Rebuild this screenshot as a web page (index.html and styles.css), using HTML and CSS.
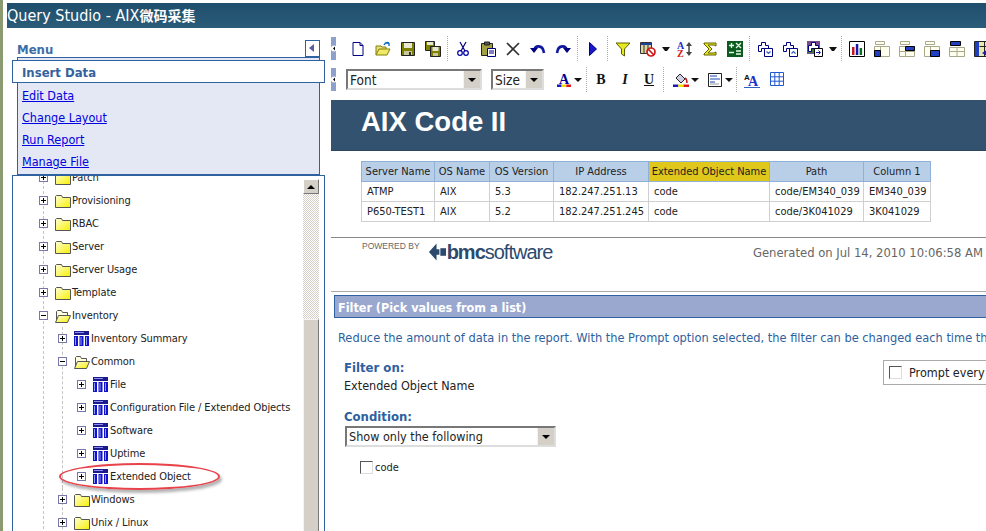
FILE: index.html
```html
<!DOCTYPE html>
<html>
<head>
  <meta charset="UTF-8">
  <title>Query Studio - AIX微码采集</title>
  <link rel="stylesheet" href="styles.css">
</head>
<body>

<svg class="gradients" xmlns="http://www.w3.org/2000/svg">
  <defs>
    <linearGradient id="g-folder" x1="0" y1="0" x2="1" y2="1">
      <stop offset="0" stop-color="#ffffd8"/>
      <stop offset="1" stop-color="#f8f000"/>
    </linearGradient>
  </defs>
</svg>

<svg class="sprite" xmlns="http://www.w3.org/2000/svg">
  <symbol id="i-folder" viewBox="0 0 16 14">
    <path d="M.5 13.500V2.500l1-1h5l1 2h8v10z" fill="url(#g-folder)" stroke="#555"/>
  </symbol>
  <symbol id="i-folder-open" viewBox="0 0 16 14">
    <path d="M1.500 13V2.500l1-1h4l1 2h5v3" fill="#ffffe0" stroke="#555"/>
    <path d="M.5 13.500l3-7h12l-3 7z" fill="url(#g-folder)" stroke="#555"/>
  </symbol>
  <symbol id="i-table" viewBox="0 0 15 15">
    <path d="M0 0h15v4H0z" fill="#1a1a8c"/>
    <path d="M1 1h9v1H1z" fill="#8c8cf0"/>
    <path d="M0 5h4v10H0zM5.500 5h4v10h-4zM11 5h4v10h-4z" fill="#1212c8"/>
    <path d="M1 6h1v8H1zM6.500 6h1v8h-1zM12 6h1v8h-1z" fill="#8c9cff"/>
  </symbol>
  <symbol id="i-new" viewBox="0 0 16 16">
    <path d="M3 1.500h7l3 3v10H3z" fill="#fff" stroke="#000080"/>
    <path d="M10 1.500v3h3" fill="none" stroke="#000080"/>
  </symbol>
  <symbol id="i-open" viewBox="0 0 16 16">
    <path d="M1 14V5h5l1 1h4v2" fill="#e8e080" stroke="#808000"/>
    <path d="M1 14l3-6h11l-3 6z" fill="#f0e868" stroke="#808000"/>
    <path d="M9 4c1-2 3-3 5-2M14 2v3M14 2h-3" fill="none" stroke="#0060c0" stroke-width="1.300"/>
  </symbol>
  <symbol id="i-save" viewBox="0 0 16 16">
    <path d="M1.500 1.500h13v13h-13z" fill="#808000" stroke="#222"/>
    <path d="M4 2h8v5H4z" fill="#e8e8d0"/>
    <path d="M4 10h8v4H4z" fill="#c8c8a0"/>
    <path d="M9 11h2v3H9z" fill="#333"/>
  </symbol>
  <symbol id="i-saveall" viewBox="0 0 16 16">
    <path d="M.5.500h9v9h-9z" fill="#808000" stroke="#222"/>
    <path d="M2 1h6v3H2z" fill="#e8e8d0"/>
    <path d="M5.500 5.500h10v10h-10z" fill="#808000" stroke="#222"/>
    <path d="M7.500 6h6v4h-6z" fill="#e8e8d0"/>
    <path d="M8 12h5v3H8z" fill="#c8c8a0"/>
  </symbol>
  <symbol id="i-cut" viewBox="0 0 16 16">
    <path d="M5 1l5 9M11 1L6 10" fill="none" stroke="#000080" stroke-width="1.200"/>
    <circle cx="5" cy="12" r="2.300" fill="#fff" stroke="#0000a0" stroke-width="1.200"/>
    <circle cx="11" cy="12" r="2.300" fill="#fff" stroke="#0000a0" stroke-width="1.200"/>
  </symbol>
  <symbol id="i-paste" viewBox="0 0 16 16">
    <path d="M1.500 2.500h11v12h-11z" fill="#a0a040" stroke="#222"/>
    <path d="M4.500 1h5v3h-5z" fill="#555" stroke="#222"/>
    <path d="M7.500 7.500h8v8h-8z" fill="#fff" stroke="#000080"/>
    <path d="M9 10h5M9 12h5" stroke="#000080"/>
  </symbol>
  <symbol id="i-delete" viewBox="0 0 16 16">
    <path d="M2 2l12 12M14 2L2 14" stroke="#333" stroke-width="1.700" fill="none"/>
  </symbol>
  <symbol id="i-undo" viewBox="0 0 16 16">
    <path d="M4 10c0-6 9-7 10 2" fill="none" stroke="#1018a0" stroke-width="2.600"/>
    <path d="M0 7h8l-4 5z" fill="#000080"/>
  </symbol>
  <symbol id="i-redo" viewBox="0 0 16 16">
    <path d="M12 10c0-6-9-7-10 2" fill="none" stroke="#1018a0" stroke-width="2.600"/>
    <path d="M16 7H8l4 5z" fill="#000080"/>
  </symbol>
  <symbol id="i-run" viewBox="0 0 16 16">
    <path d="M4.500 1.500l7 6.500-7 6.500z" fill="#1818c8" stroke="#000080"/>
  </symbol>
  <symbol id="i-filter" viewBox="0 0 16 16">
    <path d="M1 2h14L9.500 8v7l-3-2V8z" fill="#e8e820" stroke="#606000"/>
  </symbol>
  <symbol id="i-suppress" viewBox="0 0 16 16">
    <path d="M.5 1.500h11v11H.5z" fill="#d8d8a0" stroke="#333"/>
    <path d="M1 2h10v2H1z" fill="#2040a0"/>
    <path d="M4 4v8M8 4v8" stroke="#333"/>
    <circle cx="11" cy="11" r="4" fill="#fff" stroke="#d01818" stroke-width="1.700"/>
    <path d="M8 8l6 6" stroke="#d01818" stroke-width="1.700"/>
  </symbol>
  <symbol id="i-sort" viewBox="0 0 16 16">
    <text x="0" y="8" class="ic-txt ic-blue">A</text>
    <text x="0" y="16" class="ic-txt ic-red">Z</text>
    <path d="M12 1l-3 4h6zM12 15l-3-4h6z" fill="#444"/>
    <path d="M12 4v8" stroke="#444" stroke-width="1.500"/>
  </symbol>
  <symbol id="i-sum" viewBox="0 0 16 16">
    <path d="M2 2h12v3l-2-1H6l4 4-4 4h6l2-1v3H2v-1l5-5-5-5z" fill="#e8e820" stroke="#606000"/>
  </symbol>
  <symbol id="i-calc" viewBox="0 0 16 16">
    <path d="M0 0h16v16H0z" fill="#0c5c20"/>
    <path d="M2 4.500h5M4.500 2v5M9 2l5 5M14 2L9 7M2 11.500h5M9 10h5M9 13h5" stroke="#e8ffe8" stroke-width="1.300"/>
  </symbol>
  <symbol id="i-addrow-down" viewBox="0 0 16 16">
    <path d="M4.500 1.500h4v3h3v3h-7v3h-3v-6h3z" fill="#fff" stroke="#000080"/>
    <path d="M7.500 7.500h8v8h-8z" fill="#fff" stroke="#000080"/>
    <path d="M9.500 10.500l2 2 2-2" fill="none" stroke="#3060c0" stroke-width="1.200"/>
  </symbol>
  <symbol id="i-addrow-up" viewBox="0 0 16 16">
    <path d="M4.500 1.500h4v3h3v3h-7v3h-3v-6h3z" fill="#fff" stroke="#000080"/>
    <path d="M7.500 7.500h8v8h-8z" fill="#fff" stroke="#000080"/>
    <path d="M9.500 12.500l2-2 2 2" fill="none" stroke="#3060c0" stroke-width="1.200"/>
  </symbol>
  <symbol id="i-addrow-color" viewBox="0 0 16 16">
    <path d="M0 0h13v13H0z" fill="#7a4a90"/>
    <path d="M1 5h11v7H1z" fill="#3c7a50"/>
    <path d="M4.500 1.500h4v3h3v3h-7v3h-3v-6h3z" fill="#fff" stroke="#000080"/>
    <path d="M7.500 7.500h8v8h-8z" fill="#fff" stroke="#000"/>
    <path d="M9 11.500h4M11.500 9.500l2 2-2 2" fill="none" stroke="#1818a8"/>
  </symbol>
  <symbol id="i-chart" viewBox="0 0 16 16">
    <path d="M.5.500h15v15H.5z" fill="#fff" stroke="#000"/>
    <path d="M3 6h2.500v8H3z" fill="#c01820"/>
    <path d="M6.800 3h2.500v11H6.800z" fill="#1818b0"/>
    <path d="M10.600 7h2.500v7h-2.500z" fill="#0c6c20"/>
  </symbol>
  <symbol id="i-group-bl" viewBox="0 0 16 16">
    <path d="M1.500.500h9v3h-9zM.5 5.500h15v10H.5zM6.500 5.500v10" fill="#fffff0" stroke="#aaa88c"/>
    <path d="M.5 9.500h6v6h-6z" fill="#2040c0" stroke="#000"/>
  </symbol>
  <symbol id="i-group-tr" viewBox="0 0 16 16">
    <path d="M1.500.500h9v3h-9zM.5 5.500h15v10H.5zM6.500 5.500v10M.5 10.500h15" fill="#fffff0" stroke="#aaa88c"/>
    <path d="M6.500 5.500h9v4h-9z" fill="#2040c0" stroke="#000"/>
  </symbol>
  <symbol id="i-group-br" viewBox="0 0 16 16">
    <path d="M1.500.500h9v3h-9zM.5 5.500h15v10H.5zM6.500 5.500v4" fill="#fffff0" stroke="#aaa88c"/>
    <path d="M6.500 9.500h9v6h-9z" fill="#2040c0" stroke="#000"/>
  </symbol>
  <symbol id="i-group-t" viewBox="0 0 16 16">
    <path d="M1.500.500h10v4h-10z" fill="#2040c0" stroke="#000"/>
    <path d="M.5 6.500h15v9H.5zM8 6.500v9M.5 10.500h15" fill="#fffff0" stroke="#aaa88c"/>
  </symbol>
  <symbol id="i-pivot" viewBox="0 0 16 16">
    <path d="M.5.500h15v15H.5z" fill="#e8e8b0" stroke="#222"/>
    <path d="M1 1h4v14H1z" fill="#2040c0"/>
    <path d="M5.500 5.500h10M10.500 1v14" stroke="#222"/>
    <path d="M13 9l-5 3 5 3z" fill="#1818c8"/>
  </symbol>
  <symbol id="i-fontcolor" viewBox="0 0 16 16">
    <text x="3" y="12" class="ic-txt ic-navy">A</text>
    <path d="M1 12.500h4.600V15H1z" fill="#1818c0"/>
    <path d="M5.600 12.500h4.700V15H5.600z" fill="#f0e000"/>
    <path d="M10.300 12.500H15V15h-4.700z" fill="#e01818"/>
  </symbol>
  <symbol id="i-fill" viewBox="0 0 16 16">
    <path d="M3 6l4-4 5 5-4 4z" fill="#d0d0e0" stroke="#223"/>
    <path d="M12 6c2 1 2 3 2 5" fill="none" stroke="#c02020" stroke-width="1.500"/>
    <path d="M0 12.500h5.300V15H0z" fill="#1818c0"/>
    <path d="M5.300 12.500h5.300V15H5.300z" fill="#f0e000"/>
    <path d="M10.600 12.500H16V15h-5.400z" fill="#e01818"/>
  </symbol>
  <symbol id="i-format" viewBox="0 0 16 16">
    <path d="M1.500 1.500h13v13h-13z" fill="#fff" stroke="#222"/>
    <path d="M3 4h7M3 7h10M3 10h5" stroke="#1848b0"/>
    <path d="M3 12h9" stroke="#999"/>
  </symbol>
  <symbol id="i-fontstyle" viewBox="0 0 16 16">
    <text x="0" y="8" class="ic-txt-s">A</text>
    <text x="4" y="14" class="ic-txt ic-big">A</text>
    <path d="M0 15.500h16" stroke="#3060c0"/>
  </symbol>
  <symbol id="i-grid" viewBox="0 0 14 14">
    <path d="M.5.500h13v13H.5zM4.800.500v13M9.200.500v13M.5 4.800h13M.5 9.200h13" fill="#fff" stroke="#2058d0"/>
  </symbol>
  <symbol id="i-grip" viewBox="0 0 6 23">
    <path d="M0 0h5v23H0z" fill="#8ea0cc" stroke="none"/>
    <circle cx="3" cy="11.500" r="3" fill="#fff"/>
    <path d="M4 9.500l-2 2 2 2z" fill="#000"/>
  </symbol>
</svg>

<div class="title">Query Studio - AIX<span class="cjk">微码采集</span></div>

<div class="main">

  <div class="left">
    <div class="menu-head">
      <span>Menu</span>
      <span class="collapse"></span>
    </div>
    <div class="menu-box">
      <div class="tab">Insert Data</div>
      <a href="#">Edit Data</a>
      <a href="#">Change Layout</a>
      <a href="#">Run Report</a>
      <a href="#">Manage File</a>
    </div>
    <div class="tree-panel">
      <ul class="tree">
        <li class="node"><i class="box"></i><svg class="folder"><use href="#i-folder"/></svg>Patch</li>
        <li class="node"><i class="box"></i><svg class="folder"><use href="#i-folder"/></svg>Provisioning</li>
        <li class="node"><i class="box"></i><svg class="folder"><use href="#i-folder"/></svg>RBAC</li>
        <li class="node"><i class="box"></i><svg class="folder"><use href="#i-folder"/></svg>Server</li>
        <li class="node"><i class="box"></i><svg class="folder"><use href="#i-folder"/></svg>Server Usage</li>
        <li class="node"><i class="box"></i><svg class="folder"><use href="#i-folder"/></svg>Template</li>
        <li class="node"><i class="box minus"></i><svg class="folder"><use href="#i-folder-open"/></svg>Inventory</li>
        <li>
          <ul class="sub">
            <li class="node"><i class="box"></i><svg class="tbl"><use href="#i-table"/></svg>Inventory Summary</li>
            <li class="node"><i class="box minus"></i><svg class="folder"><use href="#i-folder-open"/></svg>Common</li>
            <li>
              <ul class="sub deep">
                <li class="node"><i class="box"></i><svg class="tbl"><use href="#i-table"/></svg>File</li>
                <li class="node"><i class="box"></i><svg class="tbl"><use href="#i-table"/></svg>Configuration File / Extended Objects</li>
                <li class="node"><i class="box"></i><svg class="tbl"><use href="#i-table"/></svg>Software</li>
                <li class="node"><i class="box"></i><svg class="tbl"><use href="#i-table"/></svg>Uptime</li>
                <li class="node"><i class="box"></i><svg class="tbl"><use href="#i-table"/></svg>Extended Object</li>
              </ul>
            </li>
          </ul>
        </li>
        <li>
          <ul class="sub">
            <li class="node"><i class="box"></i><svg class="folder"><use href="#i-folder"/></svg>Windows</li>
            <li class="node"><i class="box"></i><svg class="folder"><use href="#i-folder"/></svg>Unix / Linux</li>
          </ul>
        </li>
      </ul>
      <div class="scrollbar">
        <div class="scroll-up"></div>
        <div class="scroll-track"></div>
        <div class="scroll-thumb"></div>
      </div>
      <div class="oval"></div>
    </div>
  </div>

  <div class="right">

    <div class="toolbar first">
      <svg class="grip"><use href="#i-grip"/></svg>
      <span class="btn"><svg><use href="#i-new"/></svg></span>
      <span class="btn"><svg><use href="#i-open"/></svg></span>
      <span class="btn"><svg><use href="#i-save"/></svg></span>
      <span class="btn"><svg><use href="#i-saveall"/></svg></span>
      <span class="sep"></span>
      <span class="btn"><svg><use href="#i-cut"/></svg></span>
      <span class="btn"><svg><use href="#i-paste"/></svg></span>
      <span class="btn"><svg><use href="#i-delete"/></svg></span>
      <span class="btn"><svg><use href="#i-undo"/></svg></span>
      <span class="btn"><svg><use href="#i-redo"/></svg></span>
      <span class="sep"></span>
      <span class="btn"><svg><use href="#i-run"/></svg></span>
      <span class="sep"></span>
      <span class="btn"><svg><use href="#i-filter"/></svg></span>
      <span class="btn"><svg><use href="#i-suppress"/></svg></span>
      <span class="dd"></span>
      <span class="btn"><svg><use href="#i-sort"/></svg></span>
      <span class="btn"><svg><use href="#i-sum"/></svg></span>
      <span class="btn"><svg><use href="#i-calc"/></svg></span>
      <span class="sep"></span>
      <span class="btn"><svg><use href="#i-addrow-down"/></svg></span>
      <span class="btn"><svg><use href="#i-addrow-up"/></svg></span>
      <span class="btn"><svg><use href="#i-addrow-color"/></svg></span>
      <span class="dd"></span>
      <span class="sep"></span>
      <span class="btn"><svg><use href="#i-chart"/></svg></span>
      <span class="btn"><svg><use href="#i-group-bl"/></svg></span>
      <span class="btn"><svg><use href="#i-group-tr"/></svg></span>
      <span class="btn"><svg><use href="#i-group-br"/></svg></span>
      <span class="btn"><svg><use href="#i-group-t"/></svg></span>
      <span class="btn"><svg><use href="#i-pivot"/></svg></span>
    </div>

    <div class="toolbar">
      <svg class="grip"><use href="#i-grip"/></svg>
      <div class="combo font-combo"><span>Font</span><i class="combo-btn"></i></div>
      <div class="combo size-combo"><span>Size</span><i class="combo-btn"></i></div>
      <span class="btn-dd color-btn"><svg><use href="#i-fontcolor"/></svg><span class="dd-mini"></span></span>
      <span class="sep"></span>
      <span class="btn-text bold">B</span>
      <span class="btn-text ital">I</span>
      <span class="btn-text under">U</span>
      <span class="sep"></span>
      <span class="btn-dd"><svg><use href="#i-fill"/></svg><span class="dd-mini"></span></span>
      <span class="btn-dd"><svg><use href="#i-format"/></svg><span class="dd-mini"></span></span>
      <span class="sep"></span>
      <span class="btn"><svg><use href="#i-fontstyle"/></svg></span>
      <span class="btn"><svg class="grid-ico"><use href="#i-grid"/></svg></span>
    </div>

    <div class="banner">AIX Code II</div>

    <table class="report">
      <tr>
        <th class="c1">Server Name</th>
        <th class="c2">OS Name</th>
        <th class="c3">OS Version</th>
        <th class="c4">IP Address</th>
        <th class="c5 picked">Extended Object Name</th>
        <th class="c6">Path</th>
        <th class="c7">Column 1</th>
      </tr>
      <tr>
        <td>ATMP</td><td>AIX</td><td>5.3</td><td>182.247.251.13</td><td>code</td><td>code/EM340_039</td><td>EM340_039</td>
      </tr>
      <tr>
        <td>P650-TEST1</td><td>AIX</td><td>5.2</td><td>182.247.251.245</td><td>code</td><td>code/3K041029</td><td>3K041029</td>
      </tr>
    </table>

    <div class="report-foot">
      <div class="powered">POWERED BY</div>
      <div class="logo">
        <svg class="logo-mark" viewBox="0 0 20 20">
          <path d="M9 1L1 10l8 9v-6h3V7H9z" fill="#2b4a6e"/>
          <path d="M13 6h6v8h-6z" fill="#2b4a6e"/>
        </svg>
        <span class="logo-bmc">bmc</span><span class="logo-soft">software</span>
      </div>
      <div class="generated">Generated on Jul 14, 2010 10:06:58 AM</div>
    </div>

    <div class="filter">
      <div class="filter-title">Filter (Pick values from a list)</div>
      <p class="filter-help">Reduce the amount of data in the report. With the Prompt option selected, the filter can be changed each time the report is run.</p>
      <div class="filter-top">
        <div>
          <div class="label">Filter on:</div>
          <div class="value">Extended Object Name</div>
        </div>
        <div class="prompt"><i class="check"></i>Prompt every time the report runs</div>
      </div>
      <div class="label cond">Condition:</div>
      <div class="combo cond-combo"><span>Show only the following</span><i class="combo-btn"></i></div>
      <div class="pick"><i class="check"></i>code</div>
    </div>

  </div>
</div>

</body>
</html>
```

FILE: styles.css
```css
body {
  margin: 0;
  height: 531px;
  overflow: hidden;
  background-color: #fff;
  border-left: 3px solid #8c9a72;
  font-family: "DejaVu Sans", sans-serif;
  font-stretch: condensed;
  font-size: 11px;
  color: #222;
  box-sizing: border-box;
}
.sprite {
  display: none;
}
.gradients {
  display: block;
  width: 0;
  height: 0;
}
.ic-txt {
  font: bold 10px "Liberation Serif", serif;
}
.ic-txt-s {
  font: bold 8px "Liberation Sans", sans-serif;
  fill: #111;
}
.ic-blue { fill: #2030d0; }
.ic-red { fill: #d01818; }
.ic-navy { fill: #000090; font-size: 14px; }
.ic-big { fill: #2030c8; font-size: 14px; }

.title {
  margin: 3px 0 0 4px;
  height: 25px;
  line-height: 25px;
  overflow: hidden;
  background: linear-gradient(#1f4f6c, #2a5b78);
  color: #fff;
  font-size: 16px;
  font-family: "DejaVu Sans", "Noto Sans CJK SC", sans-serif;
}
.cjk {
  font-size: 14px;
  font-weight: bold;
}

.main {
  display: flex;
}
.left {
  flex: none;
  width: 313px;
  height: 503px;
  margin-right: 6px;
  padding-left: 9px;
  overflow: hidden;
}
.right {
  flex: none;
  width: 655px;
  height: 503px;
  overflow: hidden;
}

.menu-head {
  display: flex;
  justify-content: space-between;
  align-items: flex-end;
  height: 16px;
  margin: 13px 5px 0 5px;
  font-size: 13px;
  font-weight: bold;
  color: #3c6ea6;
}
.menu-head span:first-child {
  line-height: 16px;
  margin-bottom: -1px;
}
.collapse {
  position: relative;
  width: 13px;
  height: 15px;
  border: 1px solid #2e62a0;
  background-color: #fff;
}
.collapse:after {
  content: "";
  position: absolute;
  left: 3px;
  top: 3px;
  border: 4px solid transparent;
  border-left: 0;
  border-right: 5px solid #5a5aa0;
}
.menu-box {
  margin: 0 5px;
  height: 118px;
  box-sizing: border-box;
  border: 1px solid #2e62a0;
  background-color: #e3e8f4;
  font-size: 12.5px;
  padding-left: 4px;
}
.tab {
  margin: 2px -6px 0 -10px;
  padding-left: 9px;
  height: 23px;
  line-height: 23px;
  box-sizing: border-box;
  border: 1px solid #2e62a0;
  background-color: #fff;
  font-size: 13px;
  font-weight: bold;
  color: #34629c;
}
.menu-box a {
  display: block;
  height: 22px;
  line-height: 25px;
  color: #0000e0;
}

.tree-panel {
  position: relative;
  height: 356px;
  width: 313px;
  box-sizing: border-box;
  overflow: hidden;
  border: 1px solid #2e62a0;
  border-bottom: 0;
  background-color: #fff;
}
.tree, .sub {
  list-style: none;
  margin: 0;
  padding: 0;
}
.tree {
  margin: -10px 0 0 30px;
  border-left: 1px dashed #c4c4c4;
}
.sub {
  margin-left: 18px;
  border-left: 1px dashed #c4c4c4;
}
.sub.deep {
  border-left: 1px solid transparent;
}
.node {
  display: flex;
  align-items: center;
  height: 23px;
  white-space: nowrap;
  letter-spacing: -0.1px;
  color: #222;
}
.box {
  position: relative;
  flex: none;
  width: 7px;
  height: 7px;
  margin-left: -5px;
  margin-right: 7px;
  border: 1px solid #7878a8;
  background-color: #fff;
}
.box:before {
  content: "";
  position: absolute;
  left: 1px;
  top: 3px;
  width: 5px;
  height: 1px;
  background-color: #000;
}
.box:after {
  content: "";
  position: absolute;
  left: 3px;
  top: 1px;
  width: 1px;
  height: 5px;
  background-color: #000;
}
.box.minus:after {
  display: none;
}
.folder {
  flex: none;
  width: 16px;
  height: 14px;
  margin-right: 1px;
}
.tbl {
  flex: none;
  width: 15px;
  height: 15px;
  margin-right: 2px;
}

.scrollbar {
  position: absolute;
  right: 5px;
  top: 3px;
  width: 16px;
  height: 360px;
}
.scroll-up {
  position: relative;
  height: 15px;
  box-sizing: border-box;
  background-color: #d4d0c8;
  border: 1px solid;
  border-color: #fff #777 #777 #fff;
}
.scroll-up:after {
  content: "";
  position: absolute;
  left: 3px;
  top: 5px;
  border: 4px solid transparent;
  border-top: 0;
  border-bottom: 4px solid #000;
}
.scroll-track {
  height: 125px;
  background: repeating-conic-gradient(#d4d0c8 0 25%, #fff 0 50%) 0 0 / 2px 2px;
}
.scroll-thumb {
  height: 220px;
  box-sizing: border-box;
  background-color: #d4d0c8;
  border: 1px solid;
  border-color: #f4f4f4 #777 #777 #f4f4f4;
}
.oval {
  position: absolute;
  left: 46px;
  top: 287px;
  width: 157px;
  height: 23px;
  border: 2px solid #e8434a;
  border-radius: 50%;
  box-shadow: 2px 3px 3px rgba(0, 0, 0, 0.3);
}

.toolbar {
  display: flex;
  align-items: center;
  height: 25px;
  margin-top: 6px;
}
.toolbar.first {
  margin-top: 8px;
}
.grip {
  flex: none;
  width: 6px;
  height: 23px;
  margin-right: 8px;
}
.btn {
  flex: none;
  width: 25px;
  height: 16px;
  display: flex;
  justify-content: center;
}
.btn svg {
  width: 16px;
  height: 16px;
}
.btn .grid-ico {
  width: 14px;
  height: 14px;
}
.sep {
  flex: none;
  width: 0;
  height: 25px;
  margin: 0 2px;
  border-left: 1px dotted #aaa;
}
.dd {
  flex: none;
  width: 8px;
  height: 4px;
  margin: 0 2px;
  box-sizing: border-box;
  border-top: 4px solid #111;
  border-left: 3px solid transparent;
  border-right: 3px solid transparent;
}
.btn-dd {
  flex: none;
  display: flex;
  align-items: center;
  width: 34px;
  padding-left: 7px;
  box-sizing: border-box;
}
.btn-dd svg {
  width: 16px;
  height: 16px;
}
.color-btn {
  width: 30px;
  margin-left: 10px;
  padding-left: 2px;
}
.dd-mini {
  width: 0;
  height: 0;
  margin-left: 2px;
  border-top: 4px solid #111;
  border-left: 4px solid transparent;
  border-right: 4px solid transparent;
}
.btn-text {
  flex: none;
  width: 24px;
  text-align: center;
  font-family: "Liberation Serif", serif;
  font-stretch: normal;
  font-weight: bold;
  font-size: 14px;
  color: #111;
}
.ital { font-style: italic; }
.under { text-decoration: underline; }

.combo {
  display: flex;
  align-items: center;
  justify-content: space-between;
  box-sizing: border-box;
  height: 21px;
  border: 2px solid;
  border-color: #777 #ddd #ddd #777;
  background-color: #fff;
  padding-left: 2px;
  font-size: 12.5px;
}
.combo-btn {
  position: relative;
  width: 16px;
  height: 17px;
  background-color: #d4d0c8;
  border-left: 1px solid #f4f4f4;
}
.combo-btn:after {
  content: "";
  position: absolute;
  left: 4px;
  top: 7px;
  border: 4px solid transparent;
  border-bottom: 0;
  border-top: 4px solid #000;
}
.font-combo {
  flex: none;
  width: 136px;
  margin-left: 1px;
  font-size: 13.5px;
}
.size-combo {
  flex: none;
  width: 53px;
  margin-left: 9px;
  font-size: 13.5px;
}

.banner {
  height: 51px;
  margin-top: 8px;
  line-height: 44px;
  padding-left: 30px;
  background-color: #33526f;
  border-bottom: 1px solid #2b4760;
  box-sizing: border-box;
  color: #fff;
  font-family: "Liberation Sans", sans-serif;
  font-stretch: normal;
  font-size: 27.5px;
  font-weight: bold;
}

.report {
  margin: 10px 0 0 30px;
  width: 570px;
  border-collapse: collapse;
  table-layout: fixed;
  font-size: 11px;
}
.report th, .report td {
  box-sizing: border-box;
  height: 20px;
  padding: 0 0 0 5px;
  text-align: left;
  white-space: nowrap;
  overflow: hidden;
  font-weight: normal;
  border: 1px solid #cfcfcf;
  color: #222;
}
.report th {
  text-align: center;
  padding: 0;
  background-color: #b9cfe8;
  border: 1px solid #8fb0d8;
}
.report th.picked {
  background-color: #dfc71c;
}
.c1 { width: 73px; }
.c2 { width: 55px; }
.c3 { width: 64px; }
.c4 { width: 95px; }
.c5 { width: 121px; }
.c6 { width: 94px; }
.c7 { width: 67px; }

.report-foot {
  display: flex;
  align-items: flex-start;
  height: 55px;
  margin-top: 15px;
  border-top: 1px solid #888;
  border-bottom: 1px solid #aaa;
  box-sizing: border-box;
}
.powered {
  margin: 3px 0 0 31px;
  font-family: "Liberation Sans", sans-serif;
  font-stretch: normal;
  font-size: 8.5px;
  color: #666;
}
.logo {
  display: flex;
  align-items: center;
  margin: 4px 0 0 8px;
  height: 20px;
  color: #2b4a6e;
  font-family: "Liberation Sans", sans-serif;
  font-stretch: normal;
  font-size: 20px;
  letter-spacing: -1px;
}
.logo-mark {
  width: 19px;
  height: 20px;
}
.logo-bmc {
  font-weight: bold;
}
.generated {
  margin: 7px 3px 0 auto;
  white-space: nowrap;
  font-size: 12.9px;
  color: #666;
}

.filter {
  margin: 3px 0 0 3px;
}
.filter-title {
  height: 23px;
  line-height: 23px;
  box-sizing: border-box;
  padding-left: 3px;
  border-top: 1px solid #2e62a0;
  border-bottom: 1px solid #2e62a0;
  border-left: 1px solid #2e62a0;
  background-color: #9aa8cf;
  color: #fff;
  font-size: 12.5px;
  font-weight: bold;
  white-space: nowrap;
}
.filter-help {
  margin: 12px 0 0 4px;
  white-space: nowrap;
  font-size: 12.7px;
  color: #2e5f9e;
}
.filter-top {
  display: flex;
  justify-content: space-between;
  margin: 15px 0 0 10px;
  white-space: nowrap;
}
.label {
  font-size: 13px;
  font-weight: bold;
  color: #2e5f9e;
}
.value {
  margin-top: 3px;
  font-size: 12.5px;
  color: #222;
}
.prompt {
  display: flex;
  align-items: center;
  flex: none;
  height: 25px;
  width: 300px;
  margin-right: -197px;
  box-sizing: border-box;
  padding-left: 5px;
  border: 1px solid #aaa;
  font-size: 12.5px;
}
.check {
  flex: none;
  width: 11px;
  height: 11px;
  margin-right: 7px;
  background-color: #fff;
  border: 1px solid;
  border-color: #555 #ddd #ddd #555;
}
.cond {
  margin: 16px 0 0 10px;
}
.cond-combo {
  width: 211px;
  margin: 2px 0 0 11px;
}
.pick {
  display: flex;
  align-items: center;
  margin: 14px 0 0 26px;
  font-size: 11px;
}
.pick .check {
  margin-right: 2px;
}
```
